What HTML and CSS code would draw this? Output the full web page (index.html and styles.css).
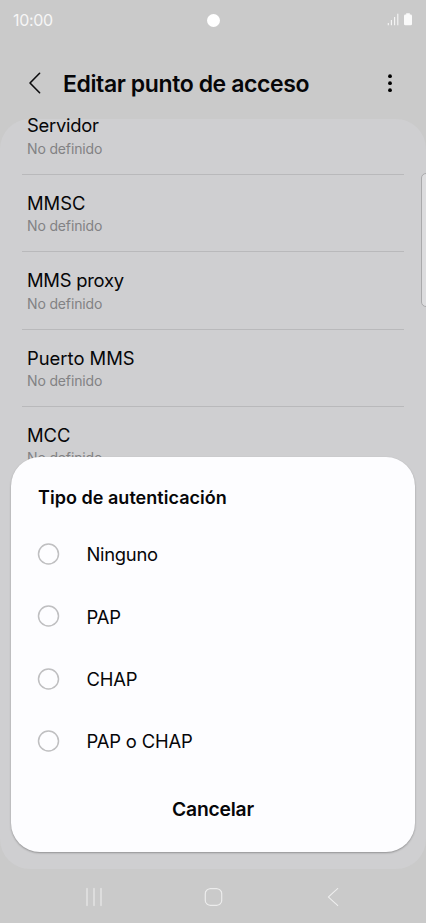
FILE: index.html
```html
<!DOCTYPE html>
<html lang="es">
<head>
    <meta charset="UTF-8">
    <meta name="viewport" content="width=device-width, initial-scale=1">
    <title>Editar punto de acceso</title>
    <link rel="stylesheet" href="styles.css">
</head>
<body>
    <div class="screen">
        <div class="status-bar">
            <span class="clock">10:00</span>
            <span class="camera"></span>
            <svg class="status-icons" width="28" height="16" viewBox="0 0 28 16">
                <path d="M2.3 11v2.3M5.4 8v5.3M8.6 5v8.3M11.8 1.8v11.5" stroke="#f6f6f6" stroke-width="1.1" fill="none"/>
                <path d="M20.2 1.2h3.6v1.3h.8q1.4 0 1.4 1.4v8q0 1.4-1.4 1.4h-5.2q-1.4 0-1.4-1.4v-8q0-1.4 1.4-1.4h.8z" fill="#fafafa"/>
            </svg>
        </div>

        <header class="top-bar">
            <svg class="back" width="14" height="24" viewBox="0 0 14 24">
                <path d="M11.6 2.3L2 12l9.6 9.7" fill="none" stroke="#0c0c0e" stroke-width="1.6" stroke-linecap="round" stroke-linejoin="round"/>
            </svg>
            <h1>Editar punto de acceso</h1>
            <svg class="more" width="6" height="20" viewBox="0 0 6 20">
                <circle cx="3" cy="3.2" r="1.9"/>
                <circle cx="3" cy="10.2" r="1.9"/>
                <circle cx="3" cy="17.2" r="1.9"/>
            </svg>
        </header>

        <main class="settings">
            <div class="item"><h2 class="tight">Servidor</h2><p>No definido</p></div>
            <div class="item"><h2>MMSC</h2><p>No definido</p></div>
            <div class="item"><h2 class="tight">MMS proxy</h2><p>No definido</p></div>
            <div class="item"><h2>Puerto MMS</h2><p>No definido</p></div>
            <div class="item"><h2>MCC</h2><p>No definido</p></div>
        </main>

        <nav class="nav-bar">
            <svg width="20" height="20" viewBox="0 0 20 20">
                <path d="M3 1.5v17M10 1.5v17M17 1.5v17"/>
            </svg>
            <svg width="20" height="20" viewBox="0 0 20 20">
                <rect x="1.2" y="1.7" width="16.6" height="16.6" rx="5"/>
            </svg>
            <svg width="20" height="20" viewBox="0 0 20 20">
                <path d="M14.7 1.5L5.4 10l9.3 8.5"/>
            </svg>
        </nav>

        <div class="edge-panel"></div>

        <div class="dialog">
            <h3>Tipo de autenticación</h3>
            <div class="option">
                <svg class="radio" width="22" height="22" viewBox="0 0 22 22"><circle cx="10.5" cy="11" r="10"/></svg>
                <span class="tight">Ninguno</span>
            </div>
            <div class="option">
                <svg class="radio" width="22" height="22" viewBox="0 0 22 22"><circle cx="10.5" cy="11" r="10"/></svg>
                <span>PAP</span>
            </div>
            <div class="option">
                <svg class="radio" width="22" height="22" viewBox="0 0 22 22"><circle cx="10.5" cy="11" r="10"/></svg>
                <span>CHAP</span>
            </div>
            <div class="option">
                <svg class="radio" width="22" height="22" viewBox="0 0 22 22"><circle cx="10.5" cy="11" r="10"/></svg>
                <span>PAP o CHAP</span>
            </div>
            <button class="cancel">Cancelar</button>
        </div>
    </div>
</body>
</html>
```
FILE: styles.css
```css
html, body {
    margin: 0;
    padding: 0;
}

body {
    font-family: Inter, Roboto, sans-serif;
    color: #060608;
}

h1, h2, h3, p {
    margin: 0;
}

.screen {
    position: relative;
    display: flex;
    flex-direction: column;
    width: 426px;
    height: 923px;
    overflow: hidden;
    background-color: #cacaca;
}

.status-bar {
    display: grid;
    grid-template-columns: 1fr 13px 1fr;
    align-items: center;
    height: 40px;
    padding: 0 12px 0 13px;
    margin-right: 1px;
}

.clock {
    color: #f6f6f6;
    font-size: 16px;
    letter-spacing: -0.3px;
}

.camera {
    width: 13px;
    height: 13px;
    border-radius: 50%;
    background-color: #fff;
}

.status-icons {
    justify-self: end;
    margin-right: -1px;
}

.top-bar {
    display: flex;
    align-items: center;
    height: 79px;
    padding: 8px 33px 0 28px;
    box-sizing: border-box;
}

.back, .more {
    margin-bottom: 1px;
}

.top-bar h1 {
    flex: 1;
    margin-left: 21px;
    font-size: 23px;
    line-height: 30px;
    font-weight: 600;
    letter-spacing: -0.4px;
    white-space: nowrap;
}

.settings {
    height: 750px;
    border-radius: 30px;
    background-color: #cfcfd1;
}

.item {
    height: 77.3px;
    margin: 0 22px;
    padding: 18px 5px 0;
    box-sizing: border-box;
    border-bottom: 1px solid #b9b9bb;
}

.item:first-child {
    height: 60px;
    margin-top: -4px;
    padding-top: 0.4px;
}

.item h2 {
    font-size: 18.4px;
    line-height: 21px;
    font-weight: 400;
}

.item p {
    color: #828284;
    font-size: 14px;
    line-height: 18px;
    margin-top: 3.4px;
    letter-spacing: -0.15px;
}

.item h2.tight, .option .tight {
    letter-spacing: -0.25px;
}

.nav-bar {
    display: flex;
    justify-content: space-between;
    padding: 18px 83px 0 84px;
}

.nav-bar svg {
    fill: none;
    stroke: #ececec;
    stroke-width: 1.5;
    stroke-linecap: round;
    stroke-linejoin: round;
    filter: drop-shadow(0 0 0.6px #aaa);
}

/* edge panel handle, half outside the screen */
.edge-panel {
    position: absolute;
    top: 173px;
    right: -8px;
    width: 11px;
    height: 132px;
    border: 1px solid #a9a9ab;
    border-radius: 5px;
    background-color: #dcdcde;
}

.dialog {
    position: absolute;
    left: 11px;
    top: 457px;
    width: 404px;
    height: 395px;
    padding: 26px 27px 0;
    box-sizing: border-box;
    border-radius: 29px;
    background-color: #fdfdff;
    box-shadow: 0 1px 2px rgba(0, 0, 0, 0.3);
}

.dialog h3 {
    margin-bottom: 10px;
    font-size: 18px;
    line-height: 30px;
    font-weight: 600;
    letter-spacing: 0.03px;
}

.option {
    display: flex;
    align-items: center;
    height: 62.3px;
    font-size: 18.4px;
    letter-spacing: -0.15px;
}

.option span {
    padding-top: 0.6px;
}

.radio {
    margin-right: 26.4px;
    fill: none;
    stroke: #bfbfc1;
    stroke-width: 1.5;
    overflow: visible;
}

.cancel {
    display: block;
    margin: 21px auto 0;
    padding: 0;
    border: 0;
    background: none;
    color: inherit;
    font: 600 19.3px/32px Inter, Roboto, sans-serif;
    letter-spacing: -0.2px;
}
```
